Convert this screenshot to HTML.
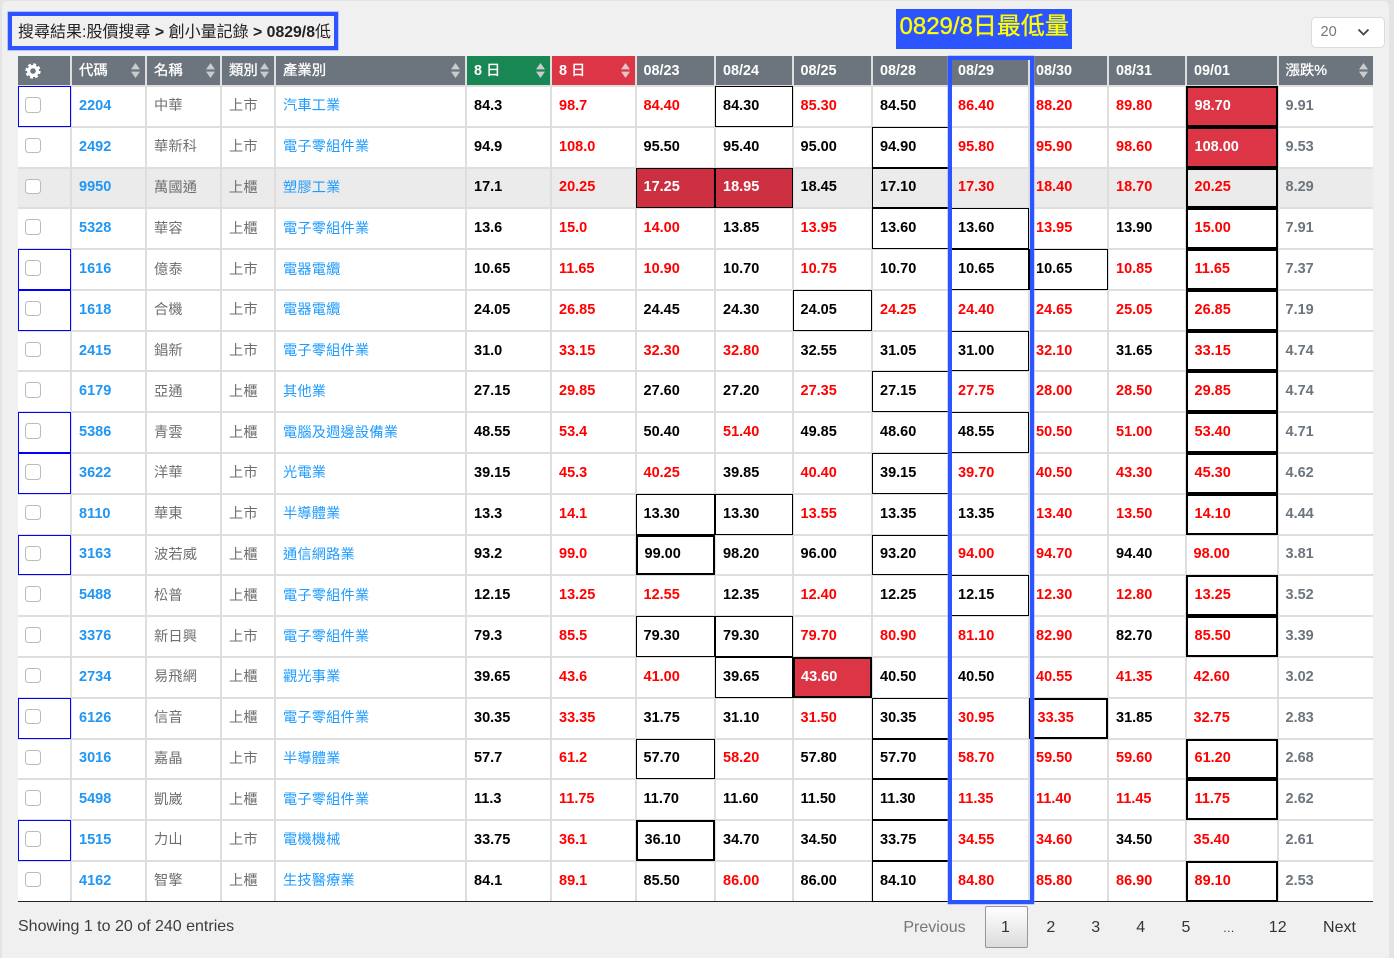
<!DOCTYPE html>
<html lang="zh-Hant"><head><meta charset="utf-8"><title>創小量記錄</title>
<style>
*{box-sizing:border-box}
html,body{margin:0;padding:0;width:1394px;height:958px;overflow:hidden;background:#e4e4e4;font-family:"Liberation Sans","Noto Sans CJK TC",sans-serif}
#wrap{position:absolute;left:0;top:0;width:1394px;height:958px;overflow:hidden}
#card{position:absolute;left:2px;top:1px;width:1387px;height:957px;background:#f0f0f0;border-radius:6px 6px 0 0}
#title{position:absolute;left:8px;top:12px;width:330px;height:38px;border:4.5px solid #2d55ff;box-shadow:0 0 0 .5px #7f97ff;background:#f0f0f0;font-size:16px;line-height:29px;padding-left:6px;color:#222;white-space:nowrap}
#title span{position:relative;top:1.5px}
#title b{font-weight:700;font-size:15.8px}
#lab{position:absolute;left:896px;top:9px;width:176px;height:40px;background:#2d55ff;color:#ff0;font-size:24px;line-height:35px;padding-left:3.5px;white-space:nowrap;-webkit-text-stroke:.35px #ff0}
#sel{position:absolute;left:1311px;top:17px;width:74px;height:31px;background:#fff;border:1px solid #dcdcdc;border-radius:5px;color:#777;font-size:14.6px;line-height:29px;padding-left:8.5px}
#sel svg{position:absolute;left:45px;top:10px}
#g{position:absolute;left:18px;top:56px;width:1354.5px;display:grid;background:#dedede;
grid-template-columns:52px 73px 73px 52px 189px 83px 83px 77px 76px 77px 76px 77px 77px 76px 90px 93.5px;
grid-template-rows:29px repeat(20,38.79px);gap:2px;height:846px;border-bottom:1.3px solid #222;overflow:visible;font-size:14.5px;line-height:20px}
#g>div{position:relative;background:#fff;display:flex;align-items:center;padding:0 0 1px 7px;white-space:nowrap;font-weight:700;color:#000}
#g>div.H{background:#6c757d;color:#fff;font-size:14.4px;padding:0 0 0 7px}
#g>div.w{font-weight:400;-webkit-text-stroke:.3px #fff}
#g>div.w b{font-weight:700;margin-right:4px;-webkit-text-stroke:0}
#g>div.w svg{-webkit-text-stroke:0}
#g>div.G{background:#198754}
#g>div.R{background:#dc3545}
#g>div svg.s{position:absolute;right:5px;top:7px}
#g>div.n{font-weight:400;color:#6f6f6f;font-size:14.2px;letter-spacing:.2px;padding-bottom:0}
#g>div.l{font-weight:400;color:#1e9bfe;font-size:14.2px;letter-spacing:.2px;padding-bottom:0}
#g>div.c{color:#2196f3}
#g>div.p{color:#6c757d}
#g>div.r{color:#f00}
#g>div:nth-child(16n+8),#g>div:nth-child(16n+10),#g>div:nth-child(16n+16){padding-left:6.5px}
#g>div.x{padding-left:6px}
#g>div.y{background:#ebebeb}
#g>div.u{padding-left:6.5px}
#g>div.b::after,#g>div.m::after,#g>div.t::after,#g>div.f::after,#g>div.e::after,#g>div.q::after{content:"";position:absolute;left:-1px;right:-1px;top:-1px;bottom:-1px;border:1.2px solid #000;z-index:2;pointer-events:none}
#g>div.m::after{border-width:2px}
#g>div.m{padding-left:7.5px}
#g>div.t::after,#g>div.f::after{border-width:2.3px;left:-1px;right:-.5px}
#g>div.t,#g>div.f{padding-left:7.5px}
#g>div.f,#g>div.e,#g>div.q{background:#dc3545;color:#fff}
#g>div.e{background:#cc3040}
#g>div.q::after{border-width:2px}
#g>div.e::after{border-width:1.5px}
#g>div.q{padding-left:7px}
#g>div.v::after{content:"";position:absolute;left:0;right:-1px;top:-1px;bottom:-1px;border:1.4px solid #00f;z-index:2}
#g>div i{position:absolute;left:7px;top:10px;width:15.5px;height:15.5px;background:#fff;border:1px solid #bbb;border-radius:3.5px}
#blue{position:absolute;left:947.5px;top:56px;width:86.7px;height:848px;border:4.6px solid #2d55ff;box-shadow:0 0 0 .4px #7f97ff;z-index:5}
#info{position:absolute;left:18px;top:917px;font-size:16px;line-height:20px;color:#3d3d3d}
.pg{position:absolute;top:918px;font-size:16px;line-height:20px;color:#333;transform:translateX(-50%)}
#cur{position:absolute;left:984.5px;top:906px;width:43px;height:42px;border:1px solid #979797;border-radius:2px;background:linear-gradient(#fff,#dcdcdc)}
</style></head><body>
<div id="wrap">
<div id="card"></div>
<div id="title"><span>搜尋結果:股價搜尋 <b>&gt;</b> 創小量記錄 <b>&gt; 0829/8</b>低</span></div>
<div id="lab">0829/8日最低量</div>
<div id="sel">20<svg width="13" height="9" viewBox="0 0 13 9"><path d="M1.5 1.5L6.5 6.5L11.5 1.5" fill="none" stroke="#444" stroke-width="1.8"/></svg></div>
<div id="g">
<div class="H"><svg width="16" height="16" viewBox="0 0 16 16" style="margin-left:0"><circle cx="8" cy="8" r="4.4" fill="none" stroke="#fff" stroke-width="3.2"/><circle cx="8" cy="8" r="6.6" fill="none" stroke="#fff" stroke-width="2.2" stroke-dasharray="2.9 2.28"/></svg></div>
<div class="H w">代碼<svg class="s" width="9" height="15" viewBox="0 0 9 15"><path d="M4.5 0L9 6.4H0zM4.5 15L0 8.6H9z" fill="#c9ccce"/></svg></div>
<div class="H w">名稱<svg class="s" width="9" height="15" viewBox="0 0 9 15"><path d="M4.5 0L9 6.4H0zM4.5 15L0 8.6H9z" fill="#c9ccce"/></svg></div>
<div class="H w">類別<svg class="s" width="9" height="15" viewBox="0 0 9 15"><path d="M4.5 0L9 6.4H0zM4.5 15L0 8.6H9z" fill="#c9ccce"/></svg></div>
<div class="H w">產業別<svg class="s" width="9" height="15" viewBox="0 0 9 15"><path d="M4.5 0L9 6.4H0zM4.5 15L0 8.6H9z" fill="#c9ccce"/></svg></div>
<div class="H G w"><b>8</b>日<svg class="s" width="9" height="15" viewBox="0 0 9 15"><path d="M4.5 0L9 6.4H0zM4.5 15L0 8.6H9z" fill="#c9ccce"/></svg></div>
<div class="H R w"><b>8</b>日<svg class="s" width="9" height="15" viewBox="0 0 9 15"><path d="M4.5 0L9 6.4H0zM4.5 15L0 8.6H9z" fill="#e6c4c8"/></svg></div>
<div class="H">08/23</div><div class="H">08/24</div><div class="H">08/25</div><div class="H">08/28</div><div class="H">08/29</div><div class="H x">08/30</div><div class="H">08/31</div><div class="H">09/01</div>
<div class="H w">漲跌%<svg class="s" width="9" height="15" viewBox="0 0 9 15"><path d="M4.5 0L9 6.4H0zM4.5 15L0 8.6H9z" fill="#c9ccce"/></svg></div>

<div class="v"><i></i></div><div class="c">2204</div><div class="n">中華</div><div class="n">上市</div><div class="l">汽車工業</div><div>84.3</div><div class="r">98.7</div><div class="r">84.40</div><div class="b">84.30</div><div class="r">85.30</div><div>84.50</div><div class="r">86.40</div><div class="r x">88.20</div><div class="r">89.80</div><div class="f">98.70</div><div class="p">9.91</div>
<div><i></i></div><div class="c">2492</div><div class="n">華新科</div><div class="n">上市</div><div class="l">電子零組件業</div><div>94.9</div><div class="r">108.0</div><div>95.50</div><div>95.40</div><div>95.00</div><div class="b">94.90</div><div class="r">95.80</div><div class="r x">95.90</div><div class="r">98.60</div><div class="f">108.00</div><div class="p">9.53</div>
<div class="y"><i></i></div><div class="c y">9950</div><div class="n y">萬國通</div><div class="n y">上櫃</div><div class="l y">塑膠工業</div><div class="y">17.1</div><div class="r y">20.25</div><div class="e">17.25</div><div class="e">18.95</div><div class="y">18.45</div><div class="b y">17.10</div><div class="r y">17.30</div><div class="r x y">18.40</div><div class="r y">18.70</div><div class="r t y">20.25</div><div class="p y">8.29</div>
<div><i></i></div><div class="c">5328</div><div class="n">華容</div><div class="n">上櫃</div><div class="l">電子零組件業</div><div>13.6</div><div class="r">15.0</div><div class="r">14.00</div><div>13.85</div><div class="r">13.95</div><div class="b">13.60</div><div class="b">13.60</div><div class="r x">13.95</div><div>13.90</div><div class="r t">15.00</div><div class="p">7.91</div>
<div class="v"><i></i></div><div class="c">1616</div><div class="n">億泰</div><div class="n">上市</div><div class="l">電器電纜</div><div>10.65</div><div class="r">11.65</div><div class="r">10.90</div><div>10.70</div><div class="r">10.75</div><div>10.70</div><div class="b">10.65</div><div class="b x">10.65</div><div class="r">10.85</div><div class="r t">11.65</div><div class="p">7.37</div>
<div class="v"><i></i></div><div class="c">1618</div><div class="n">合機</div><div class="n">上市</div><div class="l">電器電纜</div><div>24.05</div><div class="r">26.85</div><div>24.45</div><div>24.30</div><div class="b">24.05</div><div class="r">24.25</div><div class="r">24.40</div><div class="r x">24.65</div><div class="r">25.05</div><div class="r t">26.85</div><div class="p">7.19</div>
<div><i></i></div><div class="c">2415</div><div class="n">錩新</div><div class="n">上市</div><div class="l">電子零組件業</div><div>31.0</div><div class="r">33.15</div><div class="r">32.30</div><div class="r">32.80</div><div>32.55</div><div>31.05</div><div class="b">31.00</div><div class="r x">32.10</div><div>31.65</div><div class="r t">33.15</div><div class="p">4.74</div>
<div><i></i></div><div class="c">6179</div><div class="n">亞通</div><div class="n">上櫃</div><div class="l">其他業</div><div>27.15</div><div class="r">29.85</div><div>27.60</div><div>27.20</div><div class="r">27.35</div><div class="b">27.15</div><div class="r">27.75</div><div class="r x">28.00</div><div class="r">28.50</div><div class="r t">29.85</div><div class="p">4.74</div>
<div class="v"><i></i></div><div class="c">5386</div><div class="n">青雲</div><div class="n">上櫃</div><div class="l">電腦及週邊設備業</div><div>48.55</div><div class="r">53.4</div><div>50.40</div><div class="r">51.40</div><div>49.85</div><div>48.60</div><div class="b">48.55</div><div class="r x">50.50</div><div class="r">51.00</div><div class="r t">53.40</div><div class="p">4.71</div>
<div class="v"><i></i></div><div class="c">3622</div><div class="n">洋華</div><div class="n">上市</div><div class="l">光電業</div><div>39.15</div><div class="r">45.3</div><div class="r">40.25</div><div>39.85</div><div class="r">40.40</div><div class="b">39.15</div><div class="r">39.70</div><div class="r x">40.50</div><div class="r">43.30</div><div class="r t">45.30</div><div class="p">4.62</div>
<div><i></i></div><div class="c">8110</div><div class="n">華東</div><div class="n">上市</div><div class="l">半導體業</div><div>13.3</div><div class="r">14.1</div><div class="b">13.30</div><div class="b">13.30</div><div class="r">13.55</div><div>13.35</div><div>13.35</div><div class="r x">13.40</div><div class="r">13.50</div><div class="r t">14.10</div><div class="p">4.44</div>
<div class="v"><i></i></div><div class="c">3163</div><div class="n">波若威</div><div class="n">上櫃</div><div class="l">通信網路業</div><div>93.2</div><div class="r">99.0</div><div class="m">99.00</div><div>98.20</div><div>96.00</div><div class="b">93.20</div><div class="r">94.00</div><div class="r x">94.70</div><div>94.40</div><div class="r u">98.00</div><div class="p">3.81</div>
<div><i></i></div><div class="c">5488</div><div class="n">松普</div><div class="n">上櫃</div><div class="l">電子零組件業</div><div>12.15</div><div class="r">13.25</div><div class="r">12.55</div><div>12.35</div><div class="r">12.40</div><div>12.25</div><div class="b">12.15</div><div class="r x">12.30</div><div class="r">12.80</div><div class="r t">13.25</div><div class="p">3.52</div>
<div><i></i></div><div class="c">3376</div><div class="n">新日興</div><div class="n">上市</div><div class="l">電子零組件業</div><div>79.3</div><div class="r">85.5</div><div class="b">79.30</div><div class="b">79.30</div><div class="r">79.70</div><div class="r">80.90</div><div class="r">81.10</div><div class="r x">82.90</div><div>82.70</div><div class="r t">85.50</div><div class="p">3.39</div>
<div><i></i></div><div class="c">2734</div><div class="n">易飛網</div><div class="n">上櫃</div><div class="l">觀光事業</div><div>39.65</div><div class="r">43.6</div><div class="r">41.00</div><div class="b">39.65</div><div class="q">43.60</div><div>40.50</div><div>40.50</div><div class="r x">40.55</div><div class="r">41.35</div><div class="r u">42.60</div><div class="p">3.02</div>
<div class="v"><i></i></div><div class="c">6126</div><div class="n">信音</div><div class="n">上櫃</div><div class="l">電子零組件業</div><div>30.35</div><div class="r">33.35</div><div>31.75</div><div>31.10</div><div class="r">31.50</div><div class="b">30.35</div><div class="r">30.95</div><div class="r m">33.35</div><div>31.85</div><div class="r u">32.75</div><div class="p">2.83</div>
<div><i></i></div><div class="c">3016</div><div class="n">嘉晶</div><div class="n">上市</div><div class="l">半導體業</div><div>57.7</div><div class="r">61.2</div><div class="b">57.70</div><div class="r">58.20</div><div>57.80</div><div class="b">57.70</div><div class="r">58.70</div><div class="r x">59.50</div><div class="r">59.60</div><div class="r t">61.20</div><div class="p">2.68</div>
<div><i></i></div><div class="c">5498</div><div class="n">凱崴</div><div class="n">上櫃</div><div class="l">電子零組件業</div><div>11.3</div><div class="r">11.75</div><div>11.70</div><div>11.60</div><div>11.50</div><div class="b">11.30</div><div class="r">11.35</div><div class="r x">11.40</div><div class="r">11.45</div><div class="r t">11.75</div><div class="p">2.62</div>
<div class="v"><i></i></div><div class="c">1515</div><div class="n">力山</div><div class="n">上市</div><div class="l">電機機械</div><div>33.75</div><div class="r">36.1</div><div class="m">36.10</div><div>34.70</div><div>34.50</div><div class="b">33.75</div><div class="r">34.55</div><div class="r x">34.60</div><div>34.50</div><div class="r u">35.40</div><div class="p">2.61</div>
<div><i></i></div><div class="c">4162</div><div class="n">智擎</div><div class="n">上櫃</div><div class="l">生技醫療業</div><div>84.1</div><div class="r">89.1</div><div>85.50</div><div class="r">86.00</div><div>86.00</div><div class="b">84.10</div><div class="r">84.80</div><div class="r x">85.80</div><div class="r">86.90</div><div class="r t">89.10</div><div class="p">2.53</div>
</div>
<div id="blue"></div>
<div id="info">Showing 1 to 20 of 240 entries</div>
<div id="cur"></div>
<div class="pg" style="left:934.5px;color:#777">Previous</div>
<div class="pg" style="left:1005.5px">1</div>
<div class="pg" style="left:1050.8px">2</div>
<div class="pg" style="left:1095.7px">3</div>
<div class="pg" style="left:1140.7px">4</div>
<div class="pg" style="left:1186px">5</div>
<div class="pg" style="left:1228.7px;font-size:12px">…</div>
<div class="pg" style="left:1277.7px">12</div>
<div class="pg" style="left:1339.5px">Next</div>
</div>
</body></html>
